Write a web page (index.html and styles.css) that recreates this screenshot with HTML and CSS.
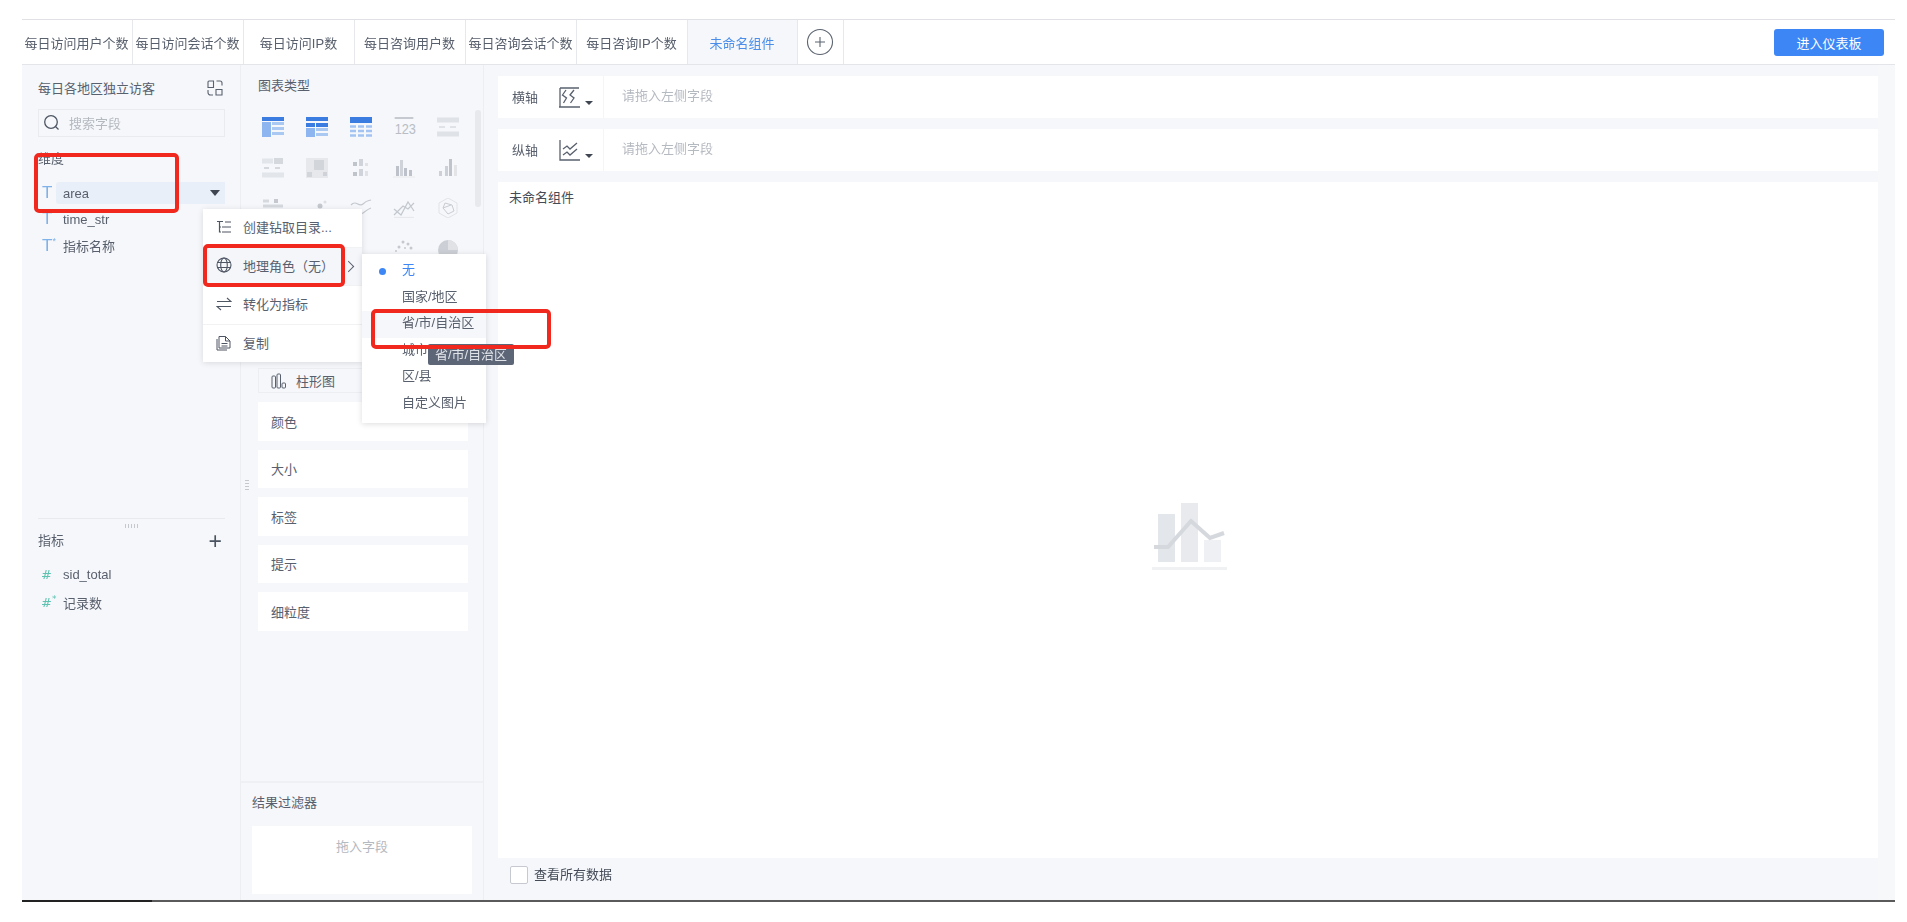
FILE: index.html
```html
<!DOCTYPE html>
<html lang="zh-CN">
<head>
    <meta charset="UTF-8">
    <title>未命名组件</title>
    <link rel="stylesheet" href="styles.css">
</head>
<body>
    <div class="app">
        <!-- Tabs -->
        <div class="tabs">
            <div class="tab">每日访问用户个数</div>
            <div class="tab">每日访问会话个数</div>
            <div class="tab">每日访问IP数</div>
            <div class="tab">每日咨询用户数</div>
            <div class="tab">每日咨询会话个数</div>
            <div class="tab">每日咨询IP个数</div>
            <div class="tab tab-active">未命名组件</div>
            <div class="tab tab-add">
                <svg width="28" height="28" viewBox="0 0 28 28"><circle cx="14" cy="14" r="12.5" fill="none" stroke="#5c6470" stroke-width="1.1"/><path d="M14 9v10M9 14h10" stroke="#5c6470" stroke-width="1.1"/></svg>
            </div>
            <div class="tabs-right"><button class="btn-enter">进入仪表板</button></div>
        </div>

        <div class="workspace">
            <!-- Fields -->
            <div class="field-panel">
                <div class="field-title">
                    <span>每日各地区独立访客</span>
                    <svg width="16" height="16" viewBox="0 0 16 16" fill="none" stroke="#59616e" stroke-width="1.1"><path d="M6.500 1H2a1 1 0 0 0-1 1v5.500h5.500zM9.500 1H13a2 2 0 0 1 2 2v2.500M9 9.500h6V15H9zM1 10v2.500A2.500 2.500 0 0 0 3.500 15H6"/></svg>
                </div>
                <div class="search">
                    <svg width="17" height="17" viewBox="0 0 17 17" fill="none" stroke="#4e5663" stroke-width="1.3"><circle cx="8" cy="8" r="6.3"/><path d="M12.500 12.500l3 3"/></svg>
                    <span>搜索字段</span>
                </div>
                <div class="group-label">维度</div>
                <div class="field-list">
                    <div class="field field-on"><span class="field-type">T</span><span class="field-name">area</span><span class="field-caret"></span></div>
                    <div class="field"><span class="field-type">T</span><span class="field-name">time_str</span></div>
                    <div class="field"><span class="field-type">T<sup>*</sup></span><span class="field-name">指标名称</span></div>
                </div>
                <div class="measure-box">
                    <div class="drag-dots"></div>
                    <div class="measure-head"><span>指标</span><span class="measure-add">+</span></div>
                    <div class="field-list">
                        <div class="field"><span class="field-type field-num">#</span><span class="field-name">sid_total</span></div>
                        <div class="field"><span class="field-type field-num">#<sup>*</sup></span><span class="field-name">记录数</span></div>
                    </div>
                </div>
            </div>

            <!-- Chart settings -->
            <div class="chart-panel">
                <div class="chart-type-title">图表类型</div>
                <div class="type-scroll"></div>
                <div class="type-grid">
                    <svg class="ico" viewBox="0 0 22 20"><rect width="22" height="4" fill="#3a7ce0"/><rect y="5" width="9" height="15" fill="#8db6f0"/><path d="M10 6.500h12M10 11.500h12M10 16.500h12" stroke="#a9c8f2" stroke-width="3"/></svg>
                    <svg class="ico" viewBox="0 0 22 20"><rect width="22" height="4" fill="#3a7ce0"/><rect y="6" width="9" height="4" fill="#3a7ce0"/><rect x="10" y="6" width="12" height="4" fill="#3a7ce0"/><rect y="11" width="9" height="9" fill="#8db6f0"/><path d="M10 12.500h12M10 17.500h12" stroke="#a9c8f2" stroke-width="3"/></svg>
                    <svg class="ico" viewBox="0 0 22 20"><rect width="22" height="6" fill="#3a7ce0"/><path d="M0 9.500h6M8 9.500h6M16 9.500h6M0 14h6M8 14h6M16 14h6M0 18.500h6M8 18.500h6M16 18.500h6" stroke="#a3c4f2" stroke-width="2.600"/></svg>
                    <div class="ico ico-num">123</div>
                    <svg class="ico" viewBox="0 0 22 20"><path d="M0 3h22M0 17h22" stroke="#dfe2e7" stroke-width="5"/><path d="M2 10h6M13 10h6" stroke="#dfe2e7" stroke-width="2"/></svg>

                    <svg class="ico" viewBox="0 0 22 20"><path d="M0 3h11M0 17h22" stroke="#e2e5e9" stroke-width="5"/><rect x="12" y="0" width="9" height="6" fill="#d5d8dd"/><path d="M2 10h5M13 10h5" stroke="#d5d8dd" stroke-width="2"/></svg>
                    <svg class="ico" viewBox="0 0 22 20"><rect width="22" height="20" fill="#e6e8ec"/><rect x="8" y="2" width="10" height="10" fill="#d2d5da"/><rect x="1" y="14" width="5" height="5" fill="#d2d5da"/><rect x="17" y="14" width="4" height="4" fill="#cfd2d8"/></svg>
                    <svg class="ico" viewBox="0 0 22 20"><rect x="3" y="4" width="4" height="4" fill="#bfc3ca"/><rect x="9" y="1" width="4" height="7" fill="#d0d3d9"/><rect x="15" y="5" width="3" height="3" fill="#e0e2e6"/><rect x="3" y="14" width="4" height="4" fill="#bfc3ca"/><rect x="9" y="11" width="4" height="7" fill="#d0d3d9"/><rect x="15" y="13" width="3" height="5" fill="#e0e2e6"/></svg>
                    <svg class="ico" viewBox="0 0 22 20"><rect x="3" y="8" width="3" height="10" fill="#bdc1c9"/><rect x="7" y="2" width="3" height="16" fill="#d0d3d9"/><rect x="11" y="10" width="3" height="8" fill="#bdc1c9"/><rect x="16" y="12" width="3" height="6" fill="#bdc1c9"/><path d="M0 19h22" stroke="#e8eaed"/></svg>
                    <svg class="ico" viewBox="0 0 22 20"><rect x="2" y="13" width="3" height="5" fill="#cdd0d6"/><rect x="8" y="8" width="3" height="10" fill="#cdd0d6"/><rect x="12" y="1" width="3" height="17" fill="#bfc3ca"/><rect x="17" y="7" width="3" height="11" fill="#e2e4e8"/></svg>

                    <svg class="ico" viewBox="0 0 22 20"><path d="M1 3h6M1 8h20M1 14h8M13 14h8" stroke="#d6d9de" stroke-width="3"/><rect x="12" y="1" width="4" height="4" fill="#c5c8cf"/></svg>
                    <svg class="ico" viewBox="0 0 22 20" fill="#c5c8cf"><circle cx="3" cy="16" r="1.5"/><circle cx="9" cy="13" r="1.8"/><circle cx="14" cy="8" r="2.5"/><circle cx="19" cy="4" r="1.5" fill="#dcdfe3"/></svg>
                    <svg class="ico" viewBox="0 0 22 20" fill="none" stroke="#c5c8cf" stroke-width="1.2"><path d="M1 7c5-6 8 3 12-1s5-3 8-4M1 17c5-4 8 1 12-2s5-4 8-5"/></svg>
                    <svg class="ico" viewBox="0 0 22 20" fill="none" stroke="#c3c7ce" stroke-width="1.2"><path d="M1 11l7 6 7-13 6 9M1 17l9-9 5 3 6-6"/><path d="M1 19.500h20" stroke="#e6e8eb"/></svg>
                    <svg class="ico" viewBox="0 0 22 20" fill="none" stroke="#c8cbd1"><path d="M11 0l9 5v10l-9 5-9-5V5z" stroke="#e1e3e7"/><path d="M8 5l7 2 2 6-6 3-5-6z"/><path d="M6 10l8-3"/></svg>

                    <span></span><span></span>
                    <svg class="ico" viewBox="0 0 22 20" fill="#c5c8cf"><circle cx="5" cy="5" r="1.5"/><circle cx="8" cy="9" r="1"/></svg>
                    <svg class="ico" viewBox="0 0 22 20" fill="#c5c8cf"><circle cx="10" cy="3" r="1.5"/><circle cx="15" cy="5" r="1.5"/><circle cx="6" cy="8" r="1.5"/><circle cx="12" cy="9" r="1"/><circle cx="18" cy="9" r="1.5"/><circle cx="3" cy="12" r="1"/></svg>
                    <svg class="ico" viewBox="0 0 22 20"><circle cx="11" cy="11" r="10" fill="#ccd0d6"/><path d="M11 11V1a10 10 0 0 1 10 10z" fill="#e0e2e6"/></svg>
                </div>
                <div class="type-select">
                    <svg width="16" height="16" viewBox="0 0 16 16" fill="none" stroke="#59616e"><rect x="1" y="3" width="3.500" height="12" rx="1"/><rect x="6" y="1" width="3.500" height="14" rx="1"/><rect x="11" y="10" width="3.500" height="5" rx="1"/></svg>
                    <span>柱形图</span>
                </div>
                <div class="mark-card">颜色</div>
                <div class="mark-card">大小</div>
                <div class="mark-card">标签</div>
                <div class="mark-card">提示</div>
                <div class="mark-card">细粒度</div>
                <div class="filter-box">
                    <div class="filter-title">结果过滤器</div>
                    <div class="filter-drop">拖入字段</div>
                </div>
                <div class="side-grip"></div>
            </div>

            <!-- Canvas -->
            <div class="main">
                <div class="main-inner">
                    <div class="axis-row">
                        <div class="axis-label">
                            <span>横轴</span>
                            <svg width="21" height="21" viewBox="0 0 21 21" fill="none" stroke="#59616e" stroke-width="1.3"><path d="M1 1h19M1 1v19M0 20h21"/><path d="M7 3L3.500 8l4 3-3 5M15 3l-4 5 4 3-3.500 5"/></svg>
                            <span class="axis-caret"></span>
                        </div>
                        <div class="axis-hint">请拖入左侧字段</div>
                    </div>
                    <div class="axis-row">
                        <div class="axis-label">
                            <span>纵轴</span>
                            <svg width="21" height="21" viewBox="0 0 21 21" fill="none" stroke="#59616e" stroke-width="1.3"><path d="M1 0v20h20"/><path d="M4 9l4-3 3 3 7-6M4 15l4-3 3 3 7-6"/></svg>
                            <span class="axis-caret"></span>
                        </div>
                        <div class="axis-hint">请拖入左侧字段</div>
                    </div>
                    <div class="canvas">
                        <div class="canvas-title">未命名组件</div>
                        <div class="canvas-empty">
                            <svg width="76" height="70" viewBox="0 0 76 70"><rect x="6" y="12" width="17" height="48" fill="#e3e6ea"/><rect x="29" y="1" width="17" height="59" fill="#e8eaee"/><rect x="52" y="38" width="17" height="22" fill="#eff0f3"/><path d="M2 45h14L39 19l19 17 14-5" fill="none" stroke="#d5d8dd" stroke-width="4"/><rect y="65" width="75" height="3" fill="#f0f1f3"/></svg>
                        </div>
                    </div>
                    <label class="see-all"><span class="check"></span>查看所有数据</label>
                </div>
            </div>
        </div>
    </div>

    <!-- Context menu -->
    <div class="menu">
        <div class="menu-item">
            <svg width="16" height="16" viewBox="0 0 16 16" fill="none" stroke="#4e5663" stroke-width="1.2"><path d="M1 2.500h6M3.500 2.500v11M9 3h6M6 8h9M6 13h9M3.500 8H5M3.500 13H5"/></svg>
            创建钻取目录...
        </div>
        <div class="menu-item menu-hover">
            <svg width="16" height="16" viewBox="0 0 16 16" fill="none" stroke="#4e5663" stroke-width="1.1"><circle cx="8" cy="8" r="7"/><ellipse cx="8" cy="8" rx="3.3" ry="7"/><path d="M1 5.500h14M1 10.500h14"/></svg>
            地理角色（无）
            <span class="menu-arrow"></span>
        </div>
        <div class="menu-item">
            <svg width="16" height="16" viewBox="0 0 16 16" fill="none" stroke="#4e5663" stroke-width="1.1"><path d="M1 5.500h14L11 2M15 10.500H1L5 14"/></svg>
            转化为指标
        </div>
        <div class="menu-item">
            <svg width="16" height="16" viewBox="0 0 16 16" fill="none" stroke="#4e5663"><path d="M3 1.500h6.500L14 6v7H3zM9.500 1.500V6H14M5.500 8.500h6M5.500 11h6M1 4v11h10"/></svg>
            复制
        </div>
    </div>

    <div class="submenu">
        <div class="sub-item sub-on">无</div>
        <div class="sub-item">国家/地区</div>
        <div class="sub-item sub-hover">省/市/自治区</div>
        <div class="sub-item">城市</div>
        <div class="sub-item">区/县</div>
        <div class="sub-item">自定义图片</div>
    </div>

    <div class="tooltip">省/市/自治区</div>

    <!-- Red annotation boxes -->
    <div class="mark mark-field"></div>
    <div class="mark mark-geo"></div>
    <div class="mark mark-province"></div>
</body>
</html>
```

FILE: styles.css
```css
/* Global */
* {
    box-sizing: border-box;
    margin: 0;
    padding: 0;
}

body {
    position: relative;
    height: 922px;
    padding: 19px 12px 0 22px;
    overflow: hidden;
    background: #fff;
    color: #59606d;
    font-family: "Liberation Sans", "Noto Sans CJK SC", sans-serif;
    font-size: 13px;
    filter: blur(0.5px);
}

.app {
    display: flex;
    flex-direction: column;
    height: 883px;
    border-bottom: 2px solid #555;
    border-image: linear-gradient(90deg, #222 7%, #5a5a5a 7%) 1;
}

/* Tabs */
.tabs {
    display: flex;
    flex: none;
    height: 46px;
    border-top: 1px solid #dfe1e4;
    border-bottom: 1px solid #e3e5e8;
}

.tab {
    display: flex;
    align-items: center;
    justify-content: center;
    width: 111px;
    padding-right: 1px;
    border-right: 1px solid #e6e8eb;
    white-space: nowrap;
}

.tab-active {
    width: 110px;
    background: #f5f7fa;
    color: #4a8eea;
}

.tab-add {
    width: 46px;
}

.tabs-right {
    display: flex;
    flex: 1;
    align-items: center;
    justify-content: flex-end;
    padding-right: 11px;
}

.btn-enter {
    width: 110px;
    height: 27px;
    border: none;
    border-radius: 3px;
    background: #3d86f6;
    color: #fff;
    font: inherit;
}

/* Layout */
.workspace {
    display: flex;
    flex: 1;
    min-height: 0;
}

/* Left field panel */
.field-panel {
    display: flex;
    flex: none;
    flex-direction: column;
    width: 218px;
    padding: 14px 15px 0 16px;
    background: #f5f7fa;
}

.field-title {
    display: flex;
    align-items: center;
    justify-content: space-between;
    height: 17px;
    padding-right: 2px;
}

.search {
    display: flex;
    align-items: center;
    gap: 9px;
    height: 28px;
    margin-top: 13px;
    padding: 0 0 1px 4px;
    border: 1px solid #e9ebee;
    color: #b5b9c0;
}

.group-label {
    margin-top: 13px;
    line-height: 17px;
}

.field-list {
    margin-top: 15px;
}

.field {
    position: relative;
    display: flex;
    align-items: center;
    height: 26.5px;
}

.field-type {
    width: 18px;
    padding-left: 4px;
    color: #7fb2e8;
    font-size: 17px;
    white-space: nowrap;
}

.field-type sup {
    font-size: 9px;
    line-height: 0;
}

.field-num {
    padding-left: 3px;
    color: #5fc2b0;
    font-family: "DejaVu Sans", sans-serif;
    font-size: 13px;
}

.field-name {
    flex: 1;
    padding-left: 7px;
}

.field-on {
    height: 22px;
    margin-bottom: 2px;
}

.field-on .field-name {
    display: flex;
    align-items: center;
    align-self: stretch;
    border-radius: 3px 0 0 3px;
    background: #e9eff8;
}

.field-caret {
    position: absolute;
    top: 8px;
    right: 5px;
    border: 5px solid transparent;
    border-top: 6px solid #3f4652;
    border-bottom: 0;
}

.measure-box {
    height: 382px;
    margin-top: auto;
    border-top: 1px solid #e8eaed;
}

.drag-dots {
    width: 14px;
    height: 4px;
    margin: 5px auto 0;
    background: repeating-linear-gradient(90deg, #c5c8cd 0 1px, transparent 1px 3px);
}

.measure-head {
    display: flex;
    align-items: center;
    justify-content: space-between;
    height: 18px;
    margin-top: 2px;
}

.measure-add {
    padding: 3px 3px 0 0;
    color: #4b5360;
    font-size: 23px;
    font-weight: 300;
    line-height: 18px;
}

.measure-box .field-list {
    margin-top: 13px;
}

.measure-box .field {
    height: 27.5px;
}

/* Chart settings */
.chart-panel {
    position: relative;
    display: flex;
    flex: none;
    flex-direction: column;
    width: 244px;
    padding: 12px 16px 0 17px;
    border-right: 1px solid #eceef1;
    border-left: 1px solid #eceef1;
    background: #f5f7fa;
}

.chart-type-title {
    line-height: 17px;
}

.type-scroll {
    position: absolute;
    top: 45px;
    right: 2px;
    width: 6px;
    height: 97px;
    border-radius: 3px;
    background: #e7e9ec;
}

.type-grid {
    display: grid;
    grid-template-columns: repeat(5, 22px);
    grid-auto-rows: 20px;
    column-gap: 21.8px;
    row-gap: 20.5px;
    height: 249px;
    margin-top: 23px;
    margin-left: 4px;
}

.ico {
    width: 22px;
    height: 20px;
}

.ico-num {
    border-top: 2px solid #c6c9cf;
    color: #b9bdc5;
    font-size: 15px;
    line-height: 19px;
    text-align: center;
    transform: scaleX(0.85);
}

.type-select {
    display: flex;
    flex: none;
    align-items: center;
    gap: 9px;
    height: 25px;
    margin-top: 2px;
    padding-left: 12px;
    border: 1px solid #eceef1;
}

.mark-card {
    display: flex;
    flex: none;
    align-items: center;
    height: 38.5px;
    margin-top: 9px;
    margin-right: -1px;
    padding-left: 13px;
    background: #fff;
}

.filter-box {
    position: absolute;
    right: 0;
    bottom: 0;
    left: 0;
    height: 119px;
    padding: 11px 11px 0 11px;
    border-top: 2px solid #eef0f3;
}

.filter-title {
    line-height: 17px;
}

.filter-drop {
    height: 68px;
    margin-top: 15px;
    padding-top: 10px;
    background: #fff;
    color: #b5b9c0;
    text-align: center;
}

.side-grip {
    position: absolute;
    top: 413px;
    left: 4px;
    width: 4px;
    height: 12px;
    background: repeating-linear-gradient(0deg, #c5c8cd 0 1px, transparent 1px 3px);
}

/* Canvas side */
.main {
    flex: 1;
    padding-right: 17px;
    background: #f7f8f9;
}

.main-inner {
    display: flex;
    flex-direction: column;
    height: 100%;
    padding: 11px 0 0 14px;
    background: #f5f7fa;
}

.axis-row {
    display: flex;
    flex: none;
    height: 42px;
    margin-bottom: 11px;
    background: #fff;
}

.axis-label {
    display: flex;
    align-items: center;
    width: 106px;
    padding: 0 0 2px 14px;
    border-right: 1px solid #f4f5f7;
}

.axis-label svg {
    margin: 2px 0 0 21px;
}

.axis-caret {
    margin: 14px 0 0 5px;
    border: 4px solid transparent;
    border-top: 4px solid #3f4652;
    border-bottom: 0;
}

.axis-hint {
    padding-left: 18px;
    color: #b5b9c0;
    line-height: 40px;
}

.canvas {
    position: relative;
    flex: 1;
    padding: 7px 0 0 11px;
    background: #fff;
}

.canvas-title {
    color: #444b57;
    line-height: 17px;
}

.canvas-empty {
    position: absolute;
    top: 320px;
    left: 654px;
}

.see-all {
    display: flex;
    flex: none;
    align-items: flex-start;
    gap: 6px;
    height: 42px;
    padding: 8px 0 0 12px;
    color: #444b57;
    line-height: 17px;
}

.check {
    width: 18px;
    height: 18px;
    border: 1px solid #c6cad0;
    border-radius: 2px;
    background: #fff;
}

/* Context menu */
.menu {
    position: absolute;
    top: 209px;
    left: 203px;
    width: 159px;
    height: 153px;
    background: #fff;
    box-shadow: 0 1px 6px rgba(0, 0, 0, 0.12);
}

.menu-item {
    position: relative;
    display: flex;
    align-items: center;
    gap: 11px;
    height: 38.5px;
    padding: 0 0 2px 13px;
    border-bottom: 1px solid #f1f2f4;
    white-space: nowrap;
}

.menu-item:last-child {
    border-bottom: none;
}

.menu-hover {
    background: #f4f6fa;
}

.menu-arrow {
    position: absolute;
    top: 14px;
    right: 9px;
    width: 9px;
    height: 9px;
    border-top: 1px solid #59606d;
    border-right: 1px solid #59606d;
    transform: rotate(45deg) scale(0.9);
}

.submenu {
    position: absolute;
    top: 254px;
    left: 362px;
    width: 124px;
    height: 169px;
    padding-top: 4px;
    background: #fff;
    box-shadow: 0 1px 6px rgba(0, 0, 0, 0.14);
}

.sub-item {
    position: relative;
    height: 26.5px;
    padding-left: 40px;
    line-height: 24px;
    white-space: nowrap;
}

.sub-on {
    color: #3d86f6;
}

.sub-on::before {
    content: "";
    position: absolute;
    top: 10px;
    left: 17px;
    width: 7px;
    height: 7px;
    border-radius: 50%;
    background: #3d86f6;
}

.sub-hover {
    background: #f5f7fb;
}

.tooltip {
    position: absolute;
    top: 344px;
    left: 428px;
    width: 86px;
    height: 21px;
    border-radius: 2px;
    background: #5d6677;
    color: #dfe2e7;
    line-height: 21px;
    text-align: center;
}

/* Annotations */
.mark {
    position: absolute;
    border: 4px solid #f0281e;
    border-radius: 5px;
}

.mark-field {
    top: 153px;
    left: 34px;
    width: 145px;
    height: 60px;
}

.mark-geo {
    top: 244px;
    left: 203px;
    width: 142px;
    height: 43px;
}

.mark-province {
    top: 309px;
    left: 371px;
    width: 180px;
    height: 40px;
}
```
